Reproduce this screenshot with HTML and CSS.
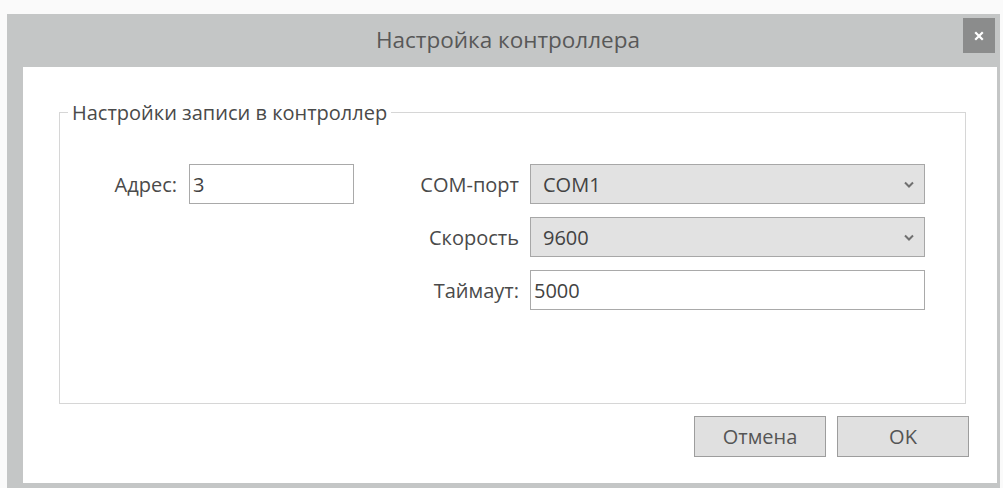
FILE: index.html
```html
<!DOCTYPE html>
<html lang="ru">
<head>
<meta charset="utf-8">
<title>Настройка контроллера</title>
<link rel="stylesheet" href="styles.css">
</head>
<body>
<div class="window">
  <div class="titlebar">
    <span class="title">Настройка контроллера</span>
    <button class="close" type="button" aria-label="Закрыть">
      <svg width="10" height="10" viewBox="0 0 10 10"><path d="M2 2 L8 8 M8 2 L2 8" stroke="#fff" stroke-width="2.2" stroke-linecap="square"/></svg>
    </button>
  </div>
  <div class="client">
    <fieldset class="group">
      <legend>Настройки записи в контроллер</legend>
      <div class="form">
        <label class="lbl lbl-left">Адрес:</label>
        <div class="field input"><span>3</span></div>
        <label class="lbl">COM-порт</label>
        <div class="field combo"><span>COM1</span><svg class="chev" width="10" height="7" viewBox="0 0 10 7"><path d="M1 1.5 L5 5.5 L9 1.5" fill="none" stroke="#707070" stroke-width="2"/></svg></div>

        <label class="lbl span-label">Скорость</label>
        <div class="field combo"><span>9600</span><svg class="chev" width="10" height="7" viewBox="0 0 10 7"><path d="M1 1.5 L5 5.5 L9 1.5" fill="none" stroke="#707070" stroke-width="2"/></svg></div>

        <label class="lbl span-label">Таймаут:</label>
        <div class="field input timeout"><span>5000</span></div>
      </div>
    </fieldset>
    <div class="buttons">
      <button class="btn" type="button">Отмена</button>
      <button class="btn" type="button">OK</button>
    </div>
  </div>
</div>
</body>
</html>
```
FILE: styles.css
```css
html, body {
  margin: 0;
  padding: 0;
}

body {
  background: #fafafa;
  font-family: "Open Sans", "Noto Sans", sans-serif;
  color: #4a4a4a;
  padding: 14px 0 0 7px;
  height: 488px;
  box-sizing: border-box;
  overflow: hidden;
}

/* window frame: wide left edge, thin right and bottom edges */
.window {
  width: 993px;
  background: #c4c6c6;
  border-left: 16px solid #c4c6c6;
  border-right: 3px solid #c4c6c6;
  border-bottom: 5px solid #c4c6c6;
  box-sizing: border-box;
}

.titlebar {
  height: 53px;
  padding-bottom: 3px;
  box-sizing: border-box;
  display: flex;
  align-items: center;
  justify-content: center;
  position: relative;
}

.title {
  font-size: 22.5px;
  color: #585858;
  margin-left: -4px;
}

.close {
  position: absolute;
  right: 2px;
  top: 4px;
  width: 32px;
  height: 35px;
  border: 0;
  padding: 0;
  background: #8b8c8c;
  display: flex;
  align-items: center;
  justify-content: center;
}

.client {
  background: #ffffff;
  height: 416px;
  padding: 0 28px 0 36px;
  box-sizing: border-box;
  display: flex;
  flex-direction: column;
  align-items: stretch;
}

.group {
  margin: 32px 3px 0 0;
  padding: 0;
  border: 1px solid #d6d6d6;
  height: 305px;
  box-sizing: border-box;
  min-width: 0;
}

.group legend {
  font-size: 20px;
  color: #4a4a4a;
  margin-left: 8px;
  padding: 0 4px;
}

.form {
  display: grid;
  grid-template-columns: 129px 165px 176px 395px;
  grid-auto-rows: 40px;
  row-gap: 13px;
  margin-top: 38px;
  align-items: center;
}

.lbl {
  font-size: 20px;
  justify-self: end;
  color: #4a4a4a;
  padding-right: 11px;
}

.lbl-left {
  padding-right: 12px;
}

.span-label {
  grid-column: 3;
}

.field {
  height: 40px;
  box-sizing: border-box;
  display: flex;
  align-items: center;
  font-size: 20px;
  color: #424242;
}

.input {
  background: #ffffff;
  border: 1px solid #a9a9a9;
  padding-left: 3px;
}

.combo {
  background: #e2e2e2;
  border: 1px solid #a7a7a7;
  padding: 0 10px 0 12px;
  justify-content: space-between;
}

.chev {
  display: block;
}

.buttons {
  display: flex;
  justify-content: flex-end;
  gap: 11px;
  margin-top: 12px;
}

.btn {
  width: 132px;
  height: 41px;
  background: #e0e0e0;
  border: 1px solid #9d9d9d;
  font-family: "Open Sans", "Noto Sans", sans-serif;
  font-size: 20px;
  color: #555555;
  padding: 0;
}
```
